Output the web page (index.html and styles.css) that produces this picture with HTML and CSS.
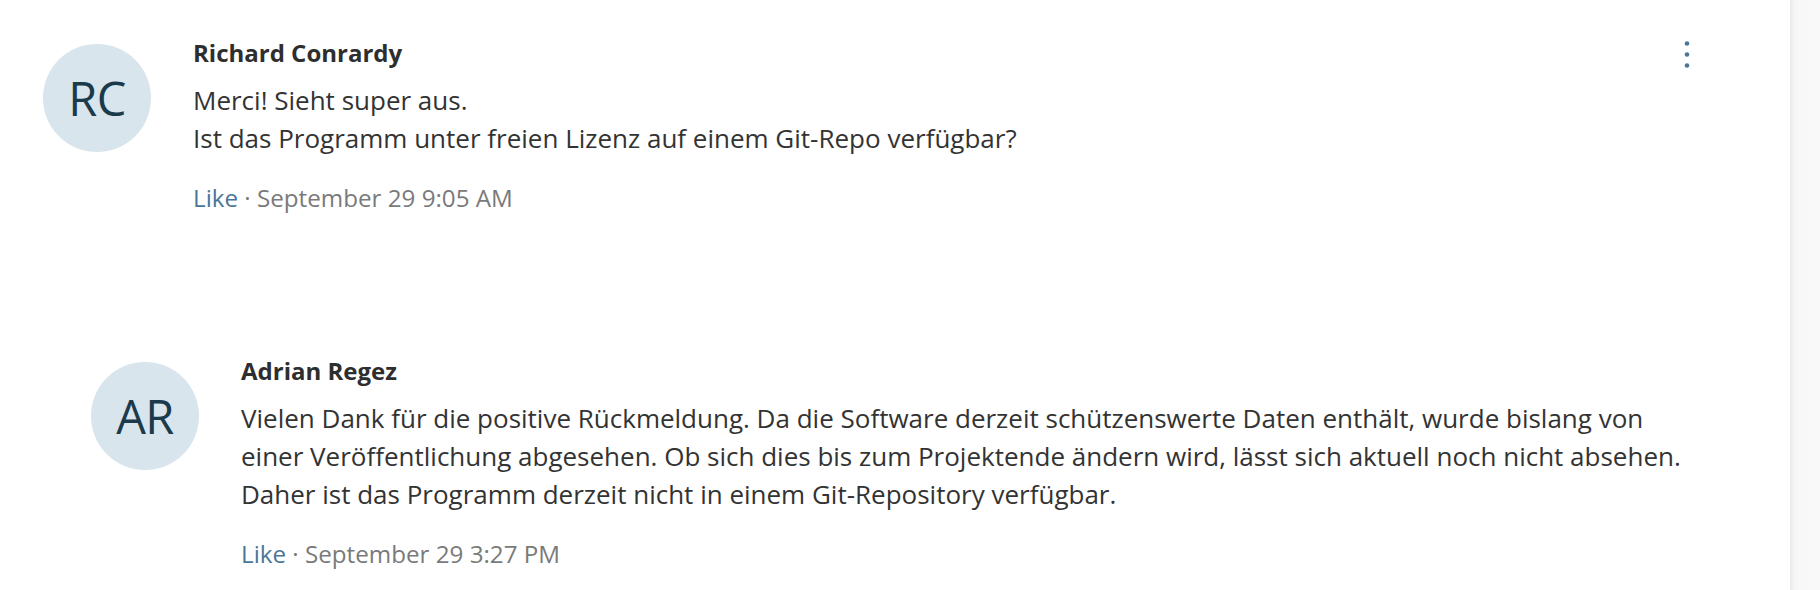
FILE: index.html
```html
<!DOCTYPE html>
<html lang="de">
<head>
<meta charset="utf-8">
<title>Kommentare</title>
<link rel="stylesheet" href="styles.css">
</head>
<body>
<div class="page">
  <main class="comments">
    <article class="comment">
      <div class="avatar">RC</div>
      <div class="content">
        <div class="author">Richard Conrardy</div>
        <p class="text">Merci! Sieht super aus.<br>Ist das Programm unter freien Lizenz auf einem Git-Repo verfügbar?</p>
        <div class="meta"><a class="like" href="#">Like</a> · September 29 9:05 AM</div>
      </div>
      <button class="menu" aria-label="Mehr">
        <svg width="6" height="27" viewBox="0 0 6 27"><circle cx="3" cy="2.5" r="2.3"/><circle cx="3" cy="13.5" r="2.3"/><circle cx="3" cy="24.5" r="2.3"/></svg>
      </button>
    </article>
    <article class="comment reply">
      <div class="avatar">AR</div>
      <div class="content">
        <div class="author">Adrian Regez</div>
        <p class="text">Vielen Dank für die positive Rückmeldung. Da die Software derzeit schützenswerte Daten enthält, wurde bislang von einer Veröffentlichung abgesehen. Ob sich dies bis zum Projektende ändern wird, lässt sich aktuell noch nicht absehen. Daher ist das Programm derzeit nicht in einem Git-Repository verfügbar.</p>
        <div class="meta"><a class="like" href="#">Like</a> · September 29 3:27 PM</div>
      </div>
    </article>
  </main>
  <aside class="side"></aside>
</div>
</body>
</html>
```
FILE: styles.css
```css
html, body {
  margin: 0;
  padding: 0;
  background: #ffffff;
}
body {
  font-family: "Open Sans", "Noto Sans", sans-serif;
  font-size: 26px;
  line-height: 38px;
  color: #333333;
}
.page {
  display: flex;
  height: 590px;
  overflow: hidden;
}
.comments {
  flex: 1;
  display: flex;
  flex-direction: column;
  gap: 135px;
  padding: 34px 93px 0 43px;
}
.comment {
  display: flex;
  align-items: flex-start;
  gap: 42px;
}
.reply {
  margin-left: 48px;
}
.avatar {
  flex: none;
  width: 108px;
  height: 108px;
  margin-top: 10px;
  border-radius: 50%;
  background: #d8e5ec;
  color: #1b3a4b;
  font-size: 47px;
  font-weight: 500;
  display: flex;
  align-items: center;
  justify-content: center;
  letter-spacing: -0.5px;
}
.content {
  flex: 1;
  min-width: 0;
}
.author {
  font-size: 24px;
  font-weight: 700;
  color: #2e2e2e;
}
.text {
  margin: 9px 0 0 0;
}
.meta {
  margin-top: 22px;
  font-size: 24.2px;
  color: #7a7a7a;
}
.like {
  color: #4b7698;
  text-decoration: none;
}
.menu {
  flex: none;
  width: 20px;
  margin-top: 7px;
  padding: 0;
  border: 0;
  background: none;
  display: flex;
  justify-content: center;
}
.menu svg {
  fill: #4b7698;
}
.side {
  flex: none;
  width: 30px;
  background: linear-gradient(to right, #e9e9e9 0, #f4f4f4 4px, #f8f8f8 10px, #f9f9f9 100%);
}
```
